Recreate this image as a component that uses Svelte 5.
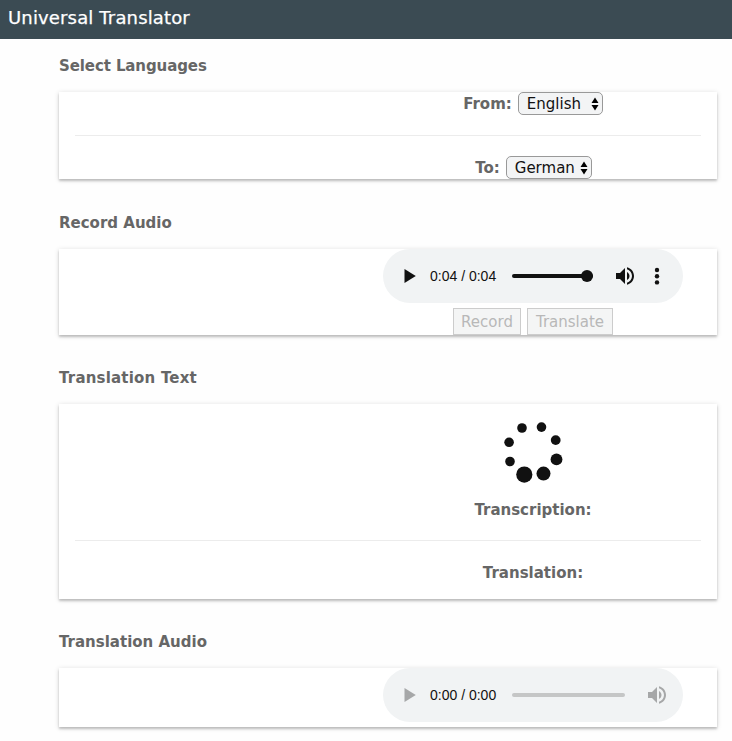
<script>
  const dots = [
    [42, 18, 4.8],
    [61.5, 17.1, 4.8],
    [75.7, 30.1, 4.9],
    [76.5, 49.4, 5.9],
    [63.5, 63.6, 7],
    [44.3, 64.6, 8.1],
    [30, 51.5, 4.8],
    [29.1, 32.3, 4.8],
  ];
</script>

{#snippet play()}
  <svg class="play" width="12" height="14" viewBox="0 0 12 14"><path d="M0.5 0 11.8 7 0.5 14Z" /></svg>
{/snippet}

{#snippet volume()}
  <svg class="volume" width="24" height="24" viewBox="0 0 24 24"
    ><path
      d="M3 9v6h4l5 5V4L7 9H3zm13.5 3c0-1.77-1.02-3.29-2.5-4.03v8.05c1.48-.73 2.5-2.25 2.5-4.02zM14 3.23v2.06c2.89.86 5 3.54 5 6.71s-2.11 5.85-5 6.71v2.06c4.01-.91 7-4.49 7-8.77s-2.99-7.86-7-8.77z"
    /></svg
  >
{/snippet}

{#snippet picker(label, width)}
  <button class="picker" style:width="{width}px">
    <span>{label}</span>
    <svg width="8" height="14" viewBox="0 0 8 14"><path d="M4 0.5 7.5 6H0.5ZM4 13.5 0.5 8H7.5Z" /></svg>
  </button>
{/snippet}

<header>Universal Translator</header>
<main>
  <h2 class="first">Select Languages</h2>
  <section class="card languages">
    <div class="field"><b>From:</b>{@render picker('English', 85)}</div>
    <hr />
    <div class="field to"><b>To:</b>{@render picker('German', 86)}</div>
  </section>

  <h2>Record Audio</h2>
  <section class="card record">
    <div class="content">
      <div class="player">
        {@render play()}
        <span class="time">0:04 / 0:04</span>
        <span class="track short"><i></i></span>
        {@render volume()}
        <svg class="more" width="6" height="18" viewBox="0 0 6 18"
          ><circle cx="3" cy="3" r="2.2" /><circle cx="3" cy="9.2" r="2.2" /><circle cx="3" cy="15.4" r="2.2" /></svg
        >
      </div>
      <div class="actions">
        <button style:width="68px" disabled>Record</button>
        <button style:width="86px" disabled>Translate</button>
      </div>
    </div>
  </section>

  <h2 class="wide">Translation Text</h2>
  <section class="card text">
    <div class="content">
      <svg class="spinner" width="106" height="88" viewBox="0 0 106 88">
        {#each dots as [x, y, r]}<circle cx={x} cy={y} {r} />{/each}
      </svg>
      <b>Transcription:</b>
    </div>
    <hr />
    <div class="content"><b>Translation:</b></div>
  </section>

  <h2>Translation Audio</h2>
  <section class="card audio">
    <div class="content">
      <div class="player idle">
        {@render play()}
        <span class="time">0:00 / 0:00</span>
        <span class="track"></span>
        {@render volume()}
      </div>
    </div>
  </section>
</main>

<style>
  :global(body) {
    margin: 0;
    background: #fefefe;
    font-family: Verdana, 'DejaVu Sans', sans-serif;
    font-size: 15px;
    color: #666;
  }
  header {
    height: 39px;
    box-sizing: border-box;
    padding: 0 8px;
    background: #3b4b53;
    color: #fff;
    font-size: 18px;
    letter-spacing: 0.15px;
    line-height: 36px;
    -webkit-text-stroke: 0.25px #fff;
  }
  main {
    padding: 0 15px 13px 59px;
  }
  h2 {
    box-sizing: border-box;
    margin: 0;
    height: 53px;
    padding-top: 1px;
    line-height: 53px;
    font-size: 15px;
    font-weight: bold;
    white-space: nowrap;
  }
  .first { letter-spacing: -0.1px; }
  .wide { letter-spacing: 0.2px; }
  .card {
    box-sizing: border-box;
    margin-bottom: 16px;
    background: #fff;
    box-shadow: 0 2px 2px rgba(0, 0, 0, 0.18), 0 1px 5px rgba(0, 0, 0, 0.16);
  }
  .languages { height: 87px; margin-bottom: 17px; }
  .record { height: 86px; }
  .text { height: 195px; }
  .audio { height: 59px; margin-bottom: 0; }
  .field,
  .content {
    padding-left: 290px;
    display: flex;
  }
  .field {
    height: 23px;
    align-items: center;
    justify-content: center;
    gap: 6px;
  }
  .field b { padding-top: 2px; }
  .to { padding-left: 291px; }
  .content {
    flex-direction: column;
    align-items: center;
  }
  hr {
    margin: 20px 16px;
    border: 0;
    height: 1px;
    background: #ececec;
  }
  b { line-height: 23px; }
  .picker {
    box-sizing: border-box;
    height: 23px;
    padding: 0 3px 0 8px;
    display: flex;
    align-items: center;
    justify-content: space-between;
    border: 1px solid #999;
    border-radius: 5px;
    background: #f3f4f5;
    color: #111;
    font: inherit;
    line-height: 20px;
  }
  .player {
    box-sizing: border-box;
    width: 300px;
    height: 54px;
    padding-left: 21px;
    display: flex;
    align-items: center;
    border-radius: 27px;
    background: #f1f3f4;
    color: #111;
    fill: #111;
  }
  .time {
    width: 67px;
    margin: 0 15px 0 14px;
    font: 14px/16px 'Liberation Sans', Arial, sans-serif;
    white-space: nowrap;
  }
  .track {
    width: 113px;
    height: 4px;
    margin-right: 20px;
    border-radius: 2px;
    background: #c5c6c6;
  }
  .short {
    display: flex;
    align-items: center;
    justify-content: flex-end;
    width: 81px;
    background: #111;
  }
  .short i {
    width: 12px;
    height: 12px;
    border-radius: 50%;
    background: #111;
  }
  .more { margin-left: 17px; }
  .idle { fill: #a6a7a8; }
  .actions {
    display: flex;
    gap: 6px;
    margin-top: 5px;
  }
  .actions button {
    box-sizing: border-box;
    height: 27px;
    padding: 0;
    border: 1px solid #ccc;
    background: #f4f5f5;
    color: #b8b8b8;
    font: inherit;
  }
  .spinner {
    display: block;
    margin-top: 6px;
    fill: #111;
  }
  .text b { padding-top: 1px; line-height: 22px; }
  .text hr { margin: 19px 16px 20px; }
</style>
